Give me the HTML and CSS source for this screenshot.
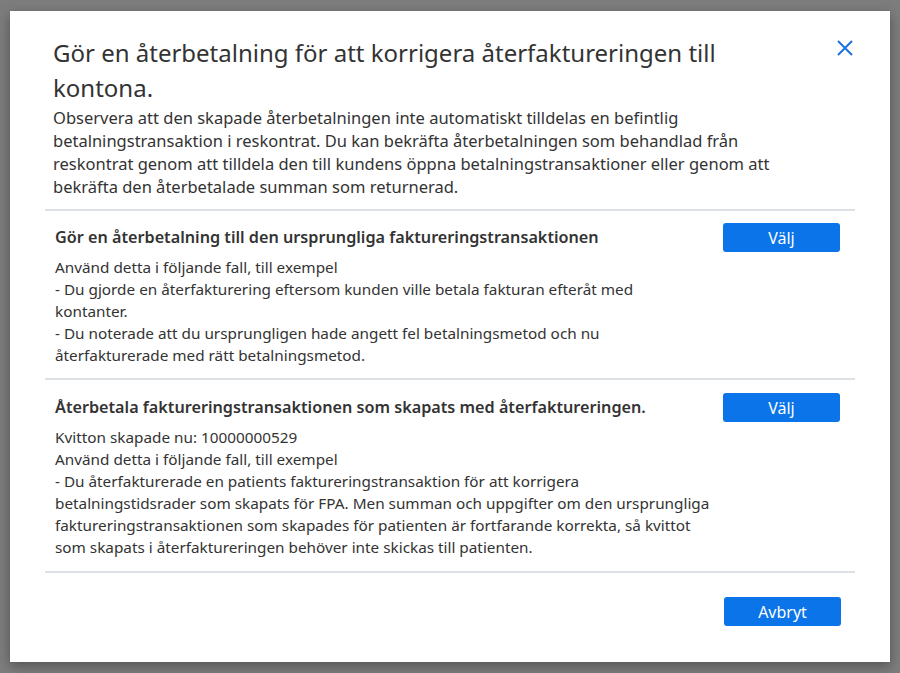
FILE: index.html
```html
<!DOCTYPE html>
<html lang="sv">
<head>
    <meta charset="UTF-8">
    <meta name="viewport" content="width=device-width, initial-scale=1.0">
    <title>Återbetalning</title>
    <link rel="stylesheet" href="styles.css">
</head>
<body>
    <!-- Dialogruta -->
    <div class="dialog">
        <div class="dialog-header">
            <div class="dialog-text">
                <h1>Gör en återbetalning för att korrigera återfaktureringen till<br>kontona.</h1>
                <p class="intro">Observera att den skapade återbetalningen inte automatiskt tilldelas en befintlig<br>betalningstransaktion i reskontrat. Du kan bekräfta återbetalningen som behandlad från<br>reskontrat genom att tilldela den till kundens öppna betalningstransaktioner eller genom att<br>bekräfta den återbetalade summan som returnerad.</p>
            </div>
            <button class="close" aria-label="Stäng">
                <svg width="16" height="16" viewBox="0 0 16 16"><path d="M1 1 L15 15 M15 1 L1 15" stroke="#1a73e0" stroke-width="2" fill="none"/></svg>
            </button>
        </div>

        <!-- Alternativ -->
        <div class="options">
            <div class="option">
                <button class="btn">Välj</button>
                <h2>Gör en återbetalning till den ursprungliga faktureringstransaktionen</h2>
                <p>Använd detta i följande fall, till exempel<br>
                - Du gjorde en återfakturering eftersom kunden ville betala fakturan efteråt med<br>kontanter.<br>
                - Du noterade att du ursprungligen hade angett fel betalningsmetod och nu<br>återfakturerade med rätt betalningsmetod.</p>
            </div>
            <div class="option">
                <button class="btn">Välj</button>
                <h2>Återbetala faktureringstransaktionen som skapats med återfaktureringen.</h2>
                <p>Kvitton skapade nu: 10000000529<br>
                Använd detta i följande fall, till exempel<br>
                - Du återfakturerade en patients faktureringstransaktion för att korrigera<br>betalningstidsrader som skapats för FPA. Men summan och uppgifter om den ursprungliga<br>faktureringstransaktionen som skapades för patienten är fortfarande korrekta, så kvittot<br>som skapats i återfaktureringen behöver inte skickas till patienten.</p>
            </div>
        </div>

        <div class="dialog-footer">
            <button class="btn">Avbryt</button>
        </div>
    </div>
</body>
</html>
```

FILE: styles.css
```css
* {
    margin: 0;
    padding: 0;
    box-sizing: border-box;
}

body {
    background: #7d7d7d;
    padding: 11px 10px;
    font-family: "Noto Sans", "Open Sans", sans-serif;
    color: #333;
}

/* Dialogruta */
.dialog {
    background: #fff;
    height: 651px;
    padding: 24px 35px 0 35px;
    box-shadow: 0 4px 12px rgba(0, 0, 0, 0.35);
}

.dialog-header {
    display: flex;
    align-items: flex-start;
    padding-left: 8px;
    padding-bottom: 11px;
}

.dialog-text {
    flex: 1;
    white-space: nowrap;
}

h1 {
    font-size: 24px;
    font-weight: 400;
    line-height: 35px;
    color: #333;
}

.intro {
    font-size: 16.5px;
    line-height: 23px;
    margin-top: 1px;
}

.close {
    background: none;
    border: none;
    cursor: pointer;
    margin: 5px 2px 0 0;
    width: 16px;
    height: 16px;
}

/* Alternativ */
.option {
    border-top: 2px solid #dde1e6;
    padding: 12px 15px 12px 10px;
    white-space: nowrap;
}

.option:last-child {
    border-bottom: 2px solid #dde1e6;
    padding-top: 13px;
    padding-bottom: 13px;
}

.option .btn {
    float: right;
}

h2 {
    font-size: 16.2px;
    font-weight: 600;
    line-height: 22px;
    margin-top: 3px;
    margin-bottom: 8px;
}

.option p {
    font-size: 15.3px;
    line-height: 22px;
}

.btn {
    width: 117px;
    height: 29px;
    background: #0a74e8;
    color: #fff;
    border: none;
    border-radius: 3px;
    font-family: inherit;
    font-size: 16px;
    cursor: pointer;
}

.dialog-footer {
    display: flex;
    justify-content: flex-end;
    padding: 24px 14px 0 0;
}
```
